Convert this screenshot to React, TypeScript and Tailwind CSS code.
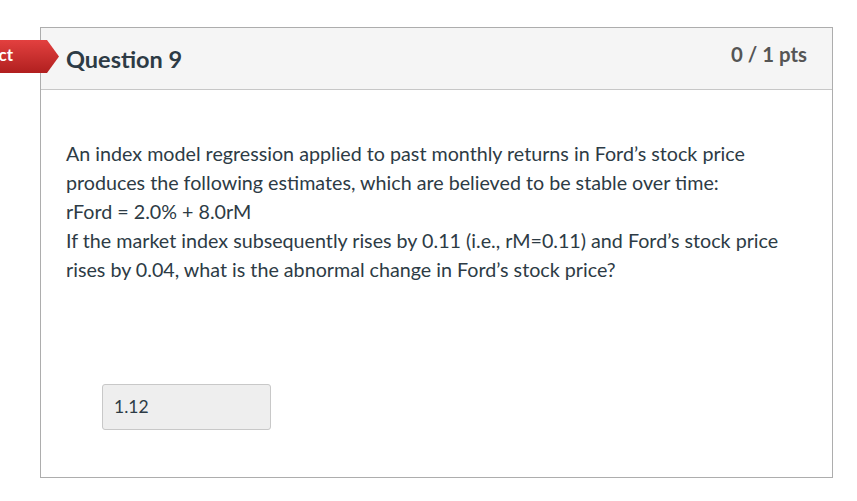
export default function App() {
  return (
    <div className="w-[857px] h-[501px] bg-white relative font-['Lato','Noto_Sans',sans-serif] text-[#2d3b45]">
      <div className="pt-[27px] pl-[40px]">
        <div className="w-[793px] h-[451px] border border-[#adadad] flex flex-col">
          <div className="h-[62px] bg-[#f5f5f5] border-b border-[#c7c7c7] flex items-center justify-between pl-[25px] pr-[25px]">
            <h2 className="text-[23.5px] font-bold text-[#2d3b45] leading-[28px]">Question 9</h2>
            <div className="text-[20.4px] font-bold text-[#555] leading-[24px] -mt-[9px]">0 / 1 pts</div>
          </div>
          <div className="pl-[25px] pr-[25px] pt-[49px]">
            <p className="text-[19.7px] leading-[29px]">
              An index model regression applied to past monthly returns in Ford’s stock price
              <br />
              produces the following estimates, which are believed to be stable over time:
              <br />
              rFord = 2.0% + 8.0rM
              <br />
              If the market index subsequently rises by 0.11 (i.e., rM=0.11) and Ford’s stock price
              <br />
              rises by 0.04, what is the abnormal change in Ford’s stock price?
            </p>
            <div className="mt-[100px] ml-[36px] w-[169px] h-[46px] bg-[#eeeeee] border border-[#c8c8c8] rounded-[3px] flex items-center pl-[11px] text-[17.5px]">
              1.12
            </div>
          </div>
        </div>
      </div>
      <div className="absolute left-0 top-[40px] h-[33px] w-[59px]">
        <div className="absolute inset-0 bg-gradient-to-b from-[#e3403f] to-[#b11f1f] [clip-path:polygon(0_0,47px_0,59px_50%,47px_100%,0_100%)]" />
        <span className="absolute right-[46px] top-[5px] text-white font-bold text-[17px] leading-[20px]">ct</span>
      </div>
    </div>
  );
}
